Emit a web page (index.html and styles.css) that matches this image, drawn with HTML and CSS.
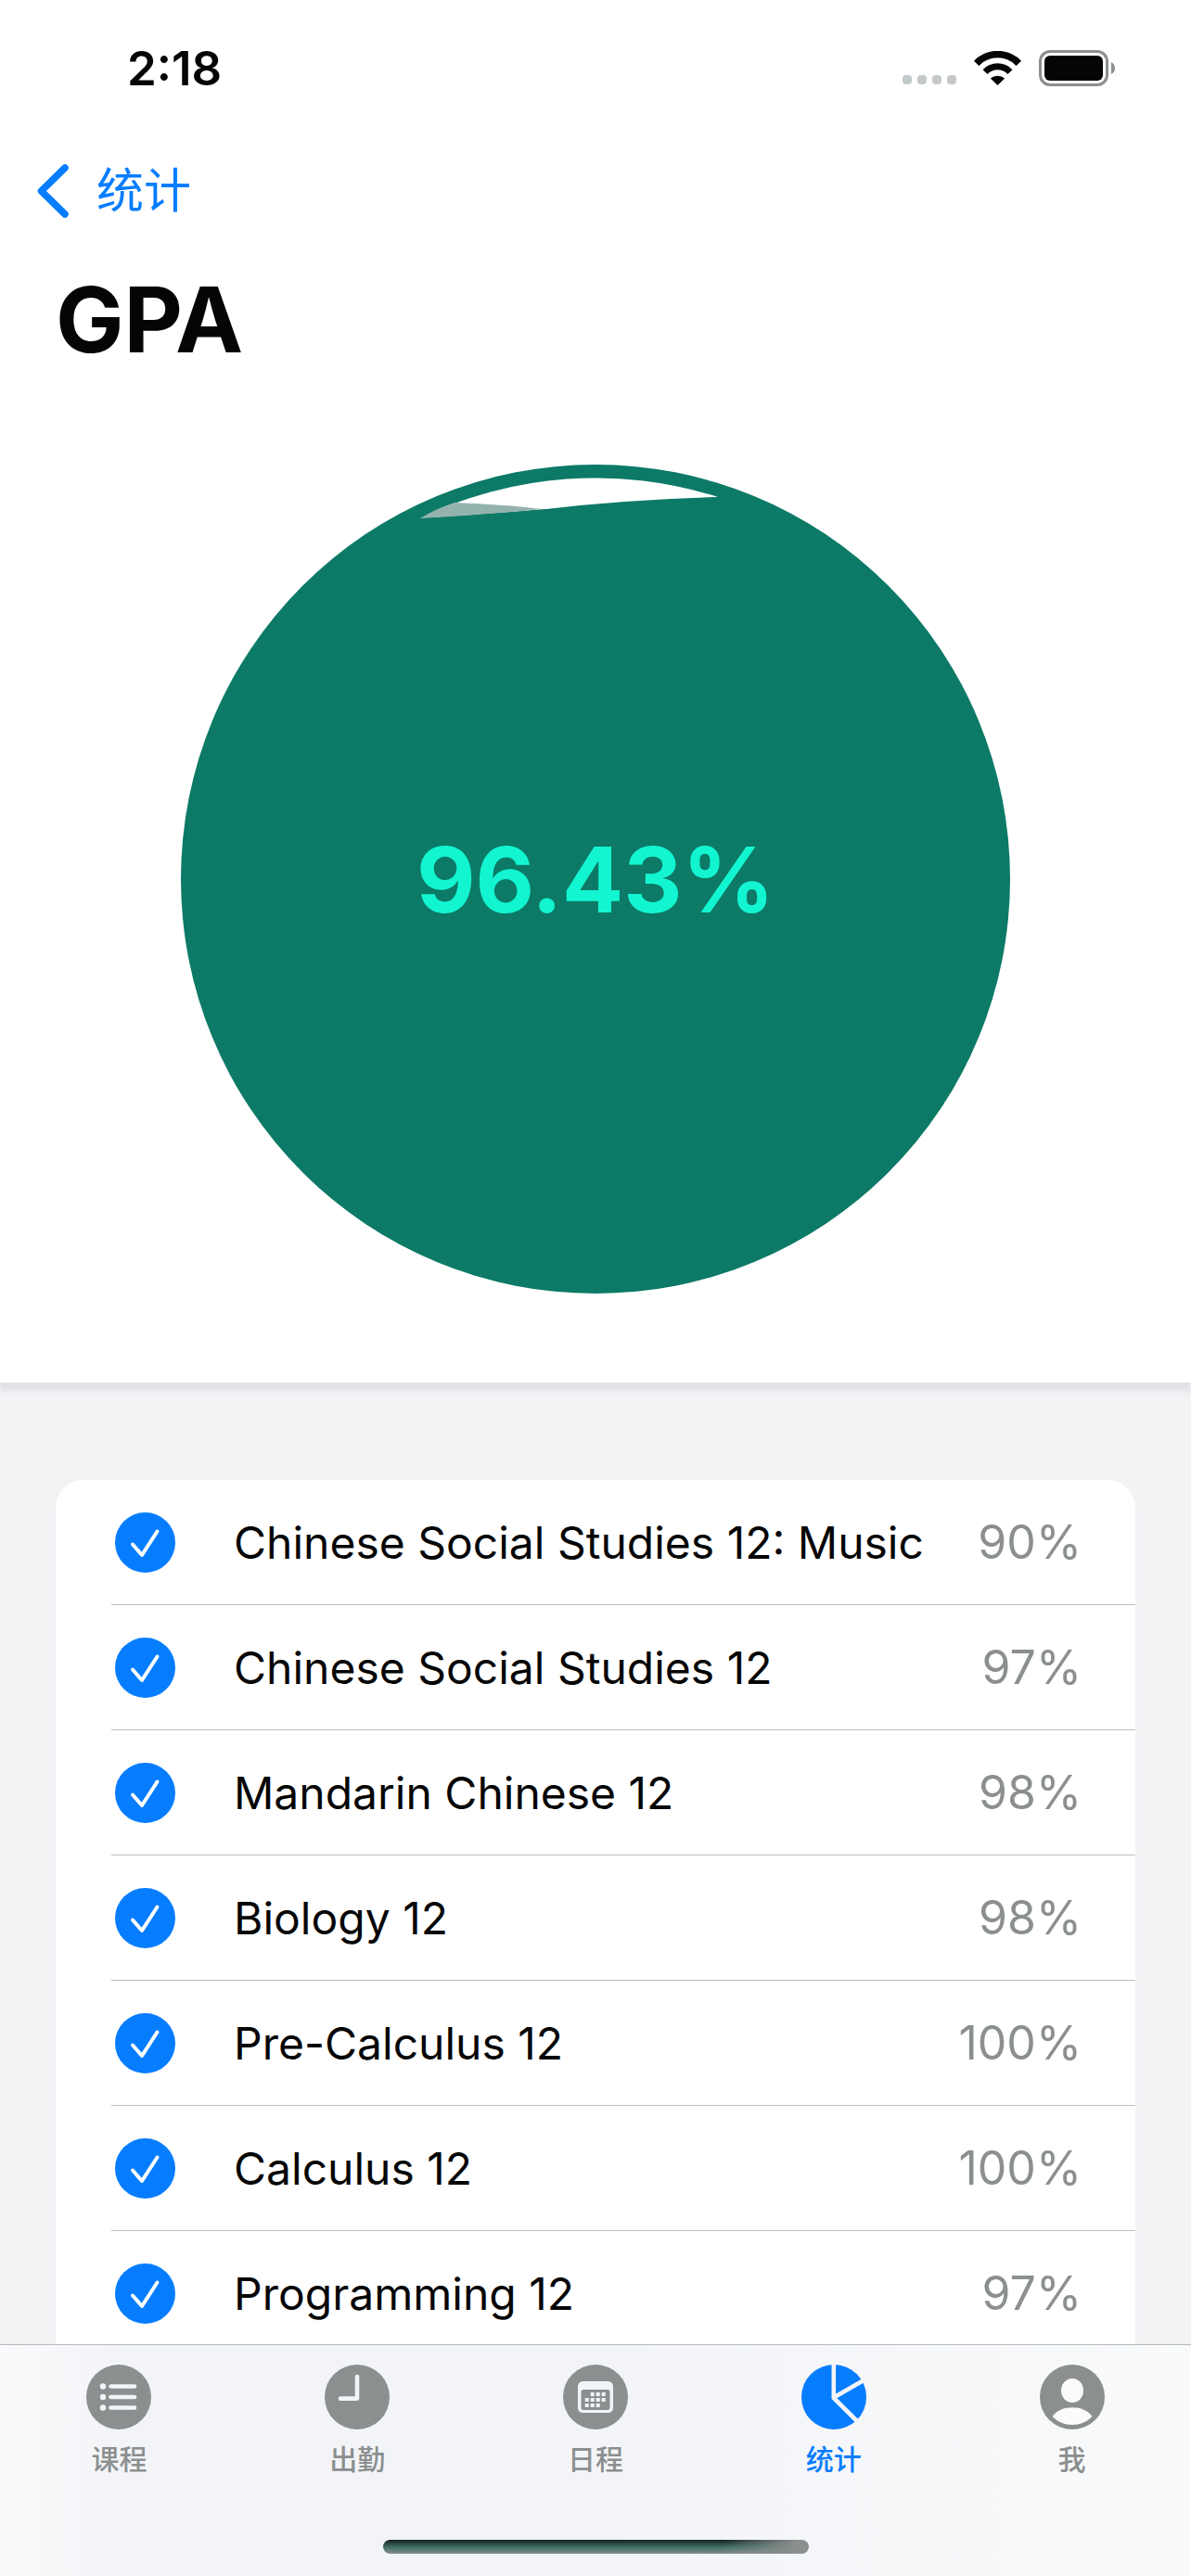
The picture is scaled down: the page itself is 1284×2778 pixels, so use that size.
FILE: index.html
```html
<!DOCTYPE html>
<html lang="zh-CN">
<head>
  <meta charset="utf-8">
  <meta name="viewport" content="width=device-width, initial-scale=1">
  <title>GPA</title>
  <link rel="stylesheet" href="styles.css">
</head>
<body>
  <div class="screen">
    <header class="header">
      <div class="status">
        <time class="status-time">2:18</time>
        <div class="status-icons">
          <span class="signal"><i></i><i></i><i></i><i></i></span>
          <svg class="wifi" viewBox="0 0 51 37" aria-hidden="true">
            <path d="M2.7 13.3A31.5 31.5 0 0 1 48.3 13.3" fill="none" stroke="#050505" stroke-width="7.5"/>
            <path d="M12.1 22.6A18.5 18.5 0 0 1 38.9 22.6" fill="none" stroke="#050505" stroke-width="7"/>
            <path d="M25.5 37L17.8 29.6A11.5 11.5 0 0 1 33.2 29.6Z" fill="#050505"/>
          </svg>
          <svg class="battery" viewBox="0 0 82 39" aria-hidden="true">
            <rect x="1.5" y="1.5" width="72" height="36" rx="10.5" fill="none" stroke="#8b8f8f" stroke-width="3"/>
            <rect x="6" y="6" width="63" height="27" rx="6" fill="#050505"/>
            <path d="M78 13Q82 15 82 19.5T78 26Z" fill="#8b8f8f"/>
          </svg>
        </div>
      </div>

      <nav class="nav">
        <a class="back" href="#stats">
          <svg class="back-icon" viewBox="0 0 34 58" aria-hidden="true">
            <path d="M30 4L4.5 29L30 54" fill="none" stroke="currentColor" stroke-width="7.5" stroke-linecap="round" stroke-linejoin="round"/>
          </svg>
          <span>统计</span>
        </a>
      </nav>

      <h1 class="title">GPA</h1>

      <div class="gauge">
        <svg class="gauge-art" viewBox="0 0 894 894" aria-hidden="true">
          <circle cx="447" cy="447" r="447" fill="#0c7a66"/>
          <path d="M258 58L579 35A432 432 0 0 0 258 58Z" fill="#fff"/>
          <path d="M258 58Q274 48 295 41Q345 43 390 48Q330 54 258 58Z" fill="#94b3ae"/>
          <path d="M258 58Q320 55 394 48Q480 38 579 35L579 60L258 60Z" fill="#0c7a66"/>
        </svg>
        <strong class="gauge-value">96.43%</strong>
      </div>
    </header>

    <main class="content">
      <ul class="courses">
        <li><label class="course"><input class="check" type="checkbox" checked><span class="name">Chinese Social Studies 12: Music</span><span class="grade">90%</span></label></li>
        <li><label class="course"><input class="check" type="checkbox" checked><span class="name">Chinese Social Studies 12</span><span class="grade">97%</span></label></li>
        <li><label class="course"><input class="check" type="checkbox" checked><span class="name">Mandarin Chinese 12</span><span class="grade">98%</span></label></li>
        <li><label class="course"><input class="check" type="checkbox" checked><span class="name">Biology 12</span><span class="grade">98%</span></label></li>
        <li><label class="course"><input class="check" type="checkbox" checked><span class="name">Pre-Calculus 12</span><span class="grade">100%</span></label></li>
        <li><label class="course"><input class="check" type="checkbox" checked><span class="name">Calculus 12</span><span class="grade">100%</span></label></li>
        <li><label class="course"><input class="check" type="checkbox" checked><span class="name">Programming 12</span><span class="grade">97%</span></label></li>
      </ul>
    </main>

    <footer class="tabbar">
      <nav class="tabs">
        <a class="tab" href="#courses">
          <svg class="tab-icon" viewBox="0 0 70 70" aria-hidden="true">
            <circle cx="35" cy="35" r="35" fill="currentColor"/>
            <g fill="#f3f4f7"><circle cx="18" cy="23.5" r="3.2"/><circle cx="18" cy="35" r="3.2"/><circle cx="18" cy="46.5" r="3.2"/></g>
            <path d="M26.5 23.5H52M26.5 35H52M26.5 46.5H52" stroke="#f3f4f7" stroke-width="4.6" stroke-linecap="round"/>
          </svg>
          <span>课程</span>
        </a>
        <a class="tab" href="#attendance">
          <svg class="tab-icon" viewBox="0 0 70 70" aria-hidden="true">
            <circle cx="35" cy="35" r="35" fill="currentColor"/>
            <path d="M35 13V36.6H17" fill="none" stroke="#f3f4f7" stroke-width="4.6" stroke-linecap="round" stroke-linejoin="round"/>
          </svg>
          <span>出勤</span>
        </a>
        <a class="tab" href="#schedule">
          <svg class="tab-icon" viewBox="0 0 70 70" aria-hidden="true">
            <circle cx="35" cy="35" r="35" fill="currentColor"/>
            <rect x="16" y="18" width="38" height="34" rx="5.5" fill="#f3f4f7"/>
            <rect x="19.5" y="27" width="31" height="22" rx="2.5" fill="currentColor"/>
            <path d="M29.7 32h4M35.7 32h4M41.7 32h4M23.7 38h4M29.7 38h4M35.7 38h4M41.7 38h4M23.7 44h4M29.7 44h4M35.7 44h4" stroke="#f3f4f7" stroke-width="4"/>
          </svg>
          <span>日程</span>
        </a>
        <a class="tab tab-active" href="#stats" aria-current="page">
          <svg class="tab-icon" viewBox="0 0 70 70" aria-hidden="true">
            <circle cx="35" cy="35" r="35" fill="currentColor"/>
            <path d="M34.8 -2V36L61 62M34.8 35.5L67 17" fill="none" stroke="#f3f4f7" stroke-width="4.6"/>
          </svg>
          <span>统计</span>
        </a>
        <a class="tab" href="#me">
          <svg class="tab-icon" viewBox="0 0 70 70" aria-hidden="true">
            <circle cx="35" cy="35" r="35" fill="currentColor"/>
            <ellipse cx="35" cy="28" rx="12" ry="13" fill="#fbfbfd"/>
            <path d="M13.5 56C18 49.5 26 46.3 35 46.3S52 49.5 56.5 56C50.500 62 43 65 35 65S19.500 62 13.5 56Z" fill="#fbfbfd"/>
          </svg>
          <span>我</span>
        </a>
      </nav>
      <div class="home-indicator"></div>
    </footer>
  </div>
</body>
</html>
```

FILE: styles.css
```css
* {
  box-sizing: border-box;
}

body {
  margin: 0;
  font-family: Inter, "Noto Sans CJK SC", sans-serif;
  color: #050505;
  background: #f2f3f5;
}

a {
  color: inherit;
  text-decoration: none;
}

.screen {
  display: flex;
  flex-direction: column;
  height: 100vh;
}

/* Header */

.header {
  flex: none;
  padding-bottom: 96px;
  background: #fff;
  box-shadow: 0 9px 5px #e1e1e8;
  z-index: 1;
}

.status {
  display: flex;
  align-items: center;
  justify-content: space-between;
  height: 146px;
  padding: 0 82px 0 137px;
}

.status-time {
  font-size: 51px;
  font-weight: 600;
}

.status-icons {
  display: flex;
  align-items: center;
  gap: 19px;
}

.signal {
  display: flex;
  gap: 6px;
  padding-top: 26px;
}

.signal i {
  width: 10px;
  height: 10px;
  border-radius: 4px;
  background: #c3c8cb;
}

.wifi {
  width: 51px;
  height: 37px;
}

.battery {
  width: 82px;
  height: 39px;
}

.nav {
  display: flex;
  align-items: center;
  height: 120px;
  padding: 0 40px;
}

.back {
  display: flex;
  align-items: center;
  gap: 30px;
  font-size: 51px;
  line-height: 60px;
  color: #067dff;
}

.back-icon {
  width: 34px;
  height: 58px;
}

.title {
  margin: 0;
  padding: 20px 60px 0;
  font-size: 98px;
  font-weight: 700;
  line-height: 118px;
}

.gauge {
  display: grid;
  place-items: center;
  margin-top: 97px;
}

.gauge-art,
.gauge-value {
  grid-area: 1 / 1;
}

.gauge-art {
  width: 894px;
  max-width: 100%;
}

.gauge-value {
  font-size: 98px;
  font-weight: 700;
  color: #13f5d1;
}

/* Course list */

.content {
  flex: 1;
  min-height: 0;
  overflow-y: auto;
  scrollbar-width: none;
  padding: 105px 60px 0;
}

.courses {
  margin: 0;
  padding: 0 0 0 60px;
  list-style: none;
  background: #fff;
  border-radius: 30px 30px 0 0;
}

.course {
  display: flex;
  align-items: center;
  height: 135px;
  padding: 0 58px 0 4px;
  border-bottom: 1px solid #babfc2;
}

.check {
  appearance: none;
  flex: none;
  width: 65px;
  height: 65px;
  margin: 0 63px 0 0;
  border: 2px solid #babfc2;
  border-radius: 50%;
}

.check:checked {
  border: 0;
  background: #067dff url("data:image/svg+xml,%3Csvg xmlns='http://www.w3.org/2000/svg' viewBox='0 0 65 65'%3E%3Cpath d='M19 34.5L29 46L45.500 20.500' fill='none' stroke='%23fff' stroke-width='4' stroke-linecap='round' stroke-linejoin='round'/%3E%3C/svg%3E") center / contain;
}

.name {
  flex: 1;
  font-size: 48px;
  white-space: nowrap;
}

.grade {
  font-size: 50px;
  color: #8b8f8f;
}

/* Tab bar */

.tabbar {
  flex: none;
  z-index: 1;
  padding-bottom: 24px;
  border-top: 1px solid #b5babd;
  background: linear-gradient(90deg, #fafafc 0, #f3f4f7 10%, #f3f4f7 50%, #f9fafb 100%);
}

.tabs {
  display: grid;
  grid-template-columns: repeat(5, 1fr);
  padding: 21px 0 69px;
}

.tab {
  display: flex;
  flex-direction: column;
  align-items: center;
  gap: 14px;
  font-size: 30px;
  font-weight: 500;
  line-height: 36px;
  color: #8b8f8f;
}

.tab-active {
  color: #067dff;
}

.tab-icon {
  width: 70px;
  height: 70px;
}

.home-indicator {
  width: 459px;
  height: 15px;
  margin: 0 auto;
  border-radius: 8px;
  background:
    linear-gradient(90deg, transparent 80%, #8b8f8f 97%),
    linear-gradient(#14201e, #3c6b60 50%, #868e8c);
}
```
